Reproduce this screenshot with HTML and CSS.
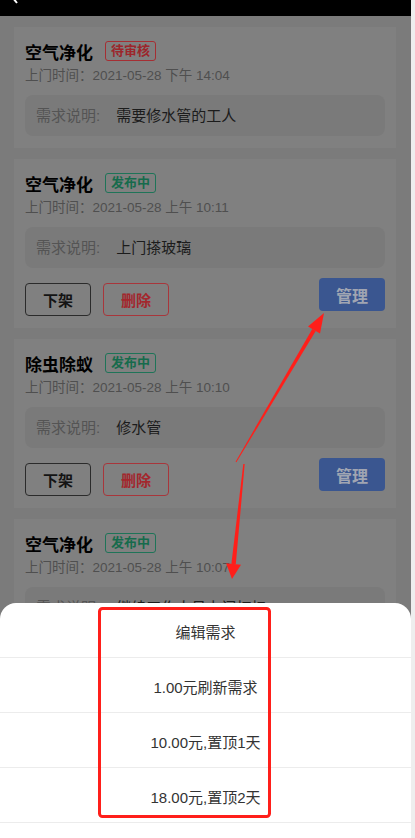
FILE: index.html
```html
<!DOCTYPE html>
<html lang="zh-CN">
<head>
    <meta charset="UTF-8">
    <meta name="viewport" content="width=device-width, initial-scale=1.0">
    <title>我的需求</title>
    <link rel="stylesheet" href="styles.css">
</head>
<body>
    <div class="screen">
      <div class="app">
        <div class="topbar">
          <svg class="back" width="20" height="16" viewBox="0 0 20 16"><path d="M13 -2 L17 3" stroke="#fff" stroke-width="2" fill="none"/></svg>
        </div>

        <div class="list">
          <div class="card">
            <div class="title-row">
              <span class="title">空气净化</span>
              <span class="tag red">待审核</span>
            </div>
            <div class="time">上门时间：2021-05-28 下午 14:04</div>
            <div class="desc">
              <span class="label">需求说明:</span>
              <span class="value">需要修水管的工人</span>
            </div>
          </div>

          <div class="card">
            <div class="title-row">
              <span class="title">空气净化</span>
              <span class="tag green">发布中</span>
            </div>
            <div class="time">上门时间：2021-05-28 上午 10:11</div>
            <div class="desc">
              <span class="label">需求说明:</span>
              <span class="value">上门搽玻璃</span>
            </div>
            <div class="actions">
              <div class="left">
                <span class="btn plain">下架</span>
                <span class="btn danger">删除</span>
              </div>
              <span class="btn primary">管理</span>
            </div>
          </div>

          <div class="card">
            <div class="title-row">
              <span class="title">除虫除蚁</span>
              <span class="tag green">发布中</span>
            </div>
            <div class="time">上门时间：2021-05-28 上午 10:10</div>
            <div class="desc">
              <span class="label">需求说明:</span>
              <span class="value">修水管</span>
            </div>
            <div class="actions">
              <div class="left">
                <span class="btn plain">下架</span>
                <span class="btn danger">删除</span>
              </div>
              <span class="btn primary">管理</span>
            </div>
          </div>

          <div class="card">
            <div class="title-row">
              <span class="title">空气净化</span>
              <span class="tag green">发布中</span>
            </div>
            <div class="time">上门时间：2021-05-28 上午 10:07</div>
            <div class="desc">
              <span class="label">需求说明:</span>
              <span class="value">继续工作人员上门打扫</span>
            </div>
          </div>
        </div>

        <!-- action sheet -->
        <div class="sheet">
          <div class="sheet-item">编辑需求</div>
          <div class="sheet-item">1.00元刷新需求</div>
          <div class="sheet-item">10.00元,置顶1天</div>
          <div class="sheet-item">18.00元,置顶2天</div>
        </div>

        <!-- annotations -->
        <svg class="notes" width="411" height="838" viewBox="0 0 411 838">
          <g fill="#ff1f1a">
            <polygon points="235.6,461.7 236.4,462.3 315.7,331 312.3,329"/>
            <polygon points="324,313 320,333.5 308,326.5"/>
            <polygon points="243.3,463.9 244.7,464.1 235.8,564.2 231.4,563.8"/>
            <polygon points="232,579 241,564.8 226.1,563.2"/>
          </g>
          <rect x="99.5" y="608.5" width="170" height="208" rx="3" fill="none" stroke="#ff1f1a" stroke-width="3"/>
        </svg>
      </div>
      <div class="scroll-edge"></div>
    </div>
</body>
</html>
```

FILE: styles.css
```css
body {
    margin: 0;
    font-family: "Liberation Sans", "Noto Sans CJK SC", sans-serif;
}

.screen {
    display: flex;
    width: 415px;
    height: 838px;
    overflow: hidden;
}
.scroll-edge {
    width: 4px;
    background-color: #eeeeee;
}

.app {
    position: relative;
    width: 411px;
    height: 838px;
    overflow: hidden;
    background-color: #7b7b7b;
}
.topbar {
    height: 16px;
    background-color: #000;
}
.topbar .back {
    display: block;
}

/* list */
.list {
    display: flex;
    flex-direction: column;
    gap: 11px;
    padding: 11px 15px 0 14px;
}
.card {
    background-color: #808080;
    padding: 12px 11px;
}
.card .title-row {
    display: flex;
    align-items: center;
    height: 24px;
}
.card .title {
    font-size: 17px;
    font-weight: bold;
    color: #000;
}
.card .tag {
    margin-left: 12px;
    height: 18px;
    line-height: 18px;
    padding: 0 5px;
    border: 1px solid;
    border-radius: 3px;
    font-size: 13px;
    font-weight: bold;
}
.card .tag.red {
    color: #9c262b;
    border-color: #a52e33;
}
.card .tag.green {
    color: #166b4c;
    border-color: #1e7458;
}
.card .time {
    margin-top: 3px;
    height: 20px;
    line-height: 20px;
    font-size: 13.5px;
    color: #4f4f4f;
}
.card .desc {
    display: flex;
    margin-top: 9px;
    height: 41px;
    line-height: 41px;
    padding: 0 11px;
    border-radius: 8px;
    background-color: #7a7a7a;
    font-size: 15px;
}
.card .desc .label {
    color: #545454;
    margin-right: 16px;
}
.card .desc .value {
    color: #1c1c1c;
}

.card .actions {
    display: flex;
    justify-content: space-between;
    align-items: flex-start;
    margin-top: 10px;
}
.card .actions .left {
    display: flex;
    gap: 12px;
    margin-top: 5px;
}
.btn {
    display: flex;
    align-items: center;
    justify-content: center;
    box-sizing: border-box;
    width: 66px;
    height: 33px;
    border-radius: 4px;
    font-size: 15px;
    font-weight: bold;
}
.btn.plain {
    border: 1px solid #2b2b2b;
    color: #141414;
}
.btn.danger {
    border: 1px solid #a8363b;
    color: #a3272d;
}
.btn.primary {
    background-color: #3a5690;
    color: #a0a5b2;
    font-size: 16px;
}

/* action sheet */
.sheet {
    position: absolute;
    left: 0;
    right: 0;
    top: 603px;
    bottom: 0;
    background-color: #fff;
    border-radius: 16px 16px 0 0;
}
.sheet-item {
    height: 55px;
    padding-top: 5px;
    box-sizing: border-box;
    line-height: 49px;
    text-align: center;
    font-size: 15px;
    color: #333;
    border-bottom: 1px solid #ececec;
}

.notes {
    position: absolute;
    left: 0;
    top: 0;
    pointer-events: none;
}
```
